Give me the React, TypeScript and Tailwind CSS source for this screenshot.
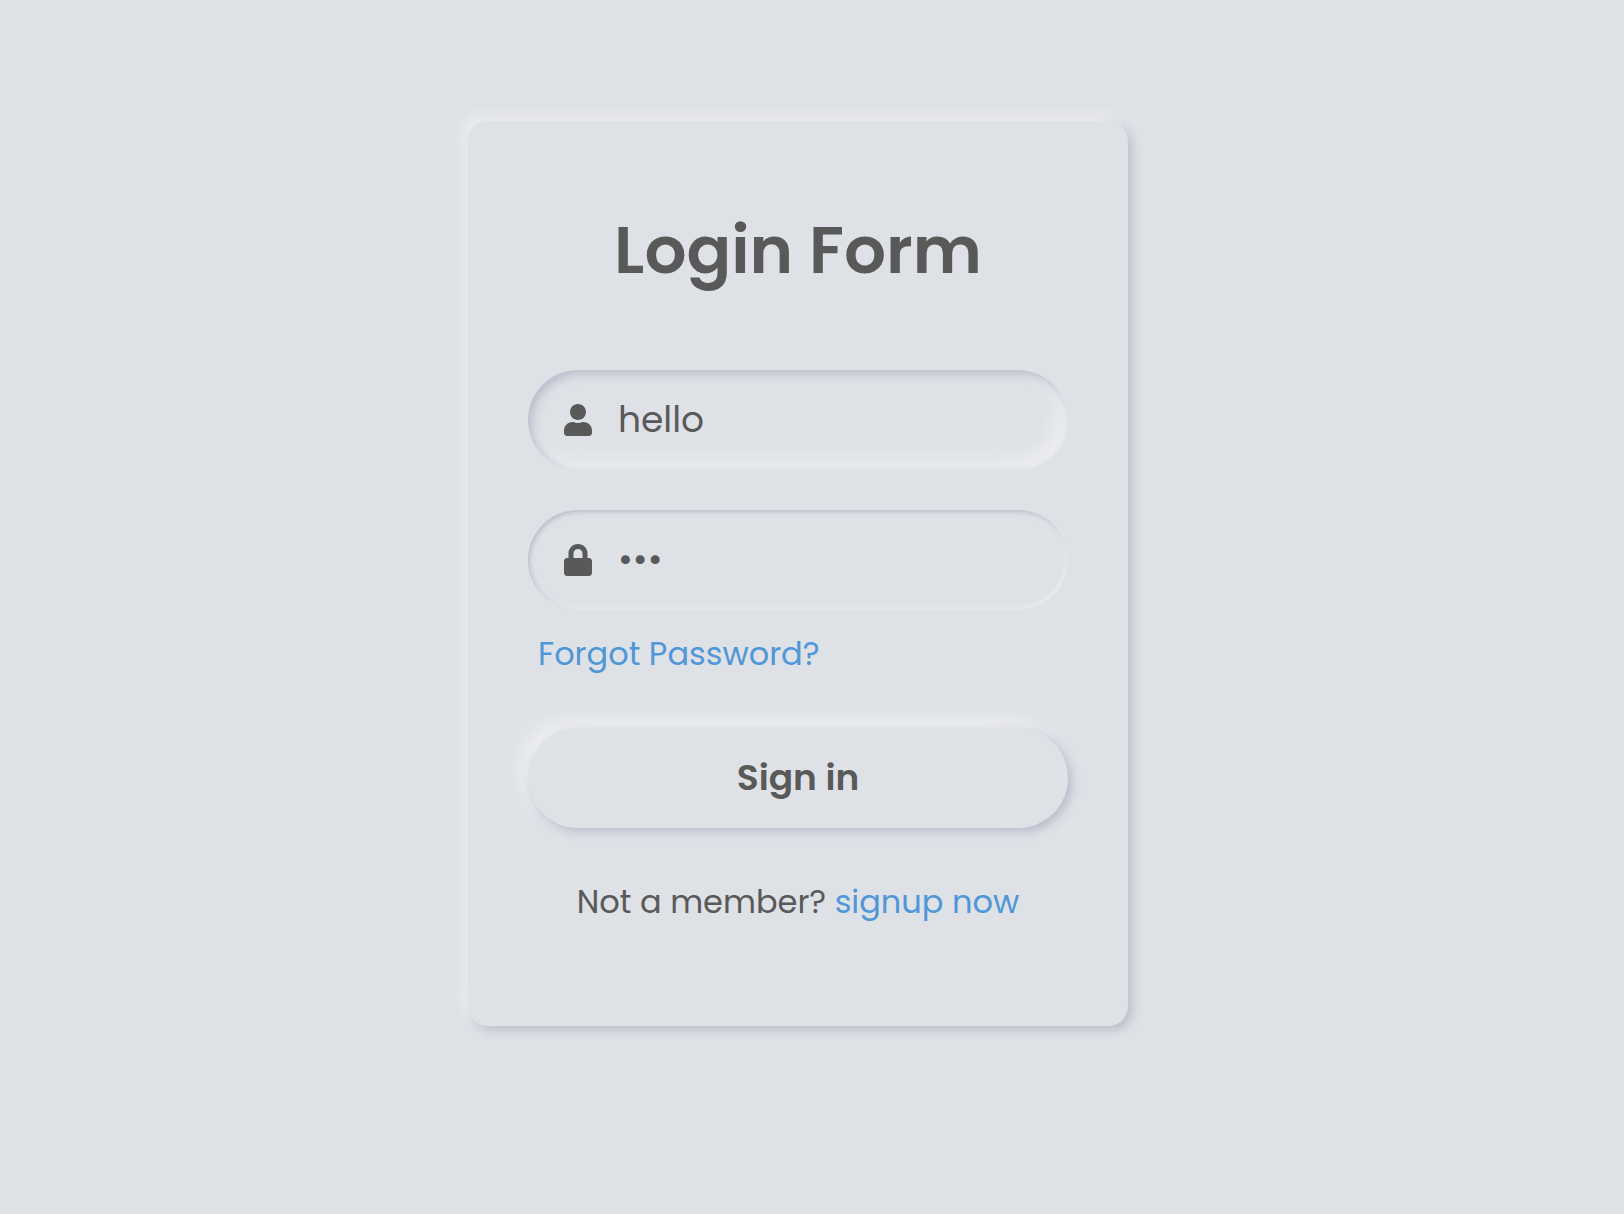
import { FaLock, FaUser } from "react-icons/fa";
import type { ComponentProps } from "react";
import type { IconType } from "react-icons";

type FieldProps = ComponentProps<"input"> & {
  icon: IconType;
  label: string;
  shadow: string;
};

function Field({ icon: Icon, label, shadow, id, ...input }: FieldProps) {
  return (
    <div className={`flex h-[100px] items-center rounded-full ${shadow}`}>
      <label htmlFor={id} aria-label={label} className="w-[90px] shrink-0 pl-[34px]">
        <Icon size={32} />
      </label>
      <input
        id={id}
        className="h-full min-w-0 flex-1 rounded-r-full bg-transparent pr-8 pb-0.5 text-[36px] outline-none"
        {...input}
      />
    </div>
  );
}

export default function App() {
  return (
    <main className="flex min-h-screen items-center justify-center bg-[#dee1e6] pr-7 pb-[67px] font-['Poppins','Inter',sans-serif] text-[#595959]">
      <form
        onSubmit={(e) => e.preventDefault()}
        className="w-full max-w-[660px] rounded-[20px] px-[60px] py-20 text-center shadow-[-6px_-6px_14px_#fffcff73,4px_4px_10px_rgba(94,104,121,0.288)]"
      >
        <h1 className="mb-[70px] text-[66px] leading-[99px] font-semibold">Login Form</h1>

        <div className="flex flex-col gap-10">
          <Field
            id="username"
            label="Email or Phone"
            icon={FaUser}
            type="text"
            defaultValue="hello"
            shadow="shadow-[inset_4px_4px_10px_#babecc,inset_-10px_-10px_20px_#fffcff73]"
          />
          <Field
            id="password"
            label="Password"
            icon={FaLock}
            type="password"
            defaultValue="abc"
            shadow="shadow-[inset_2px_2px_4px_#babecc,inset_-2px_-2px_4px_#fffcff73]"
          />
        </div>

        <div className="mt-5 mb-[50px] ml-[10px] text-left text-[32px] leading-[48px] text-[#5097d8]">
          <a href="#forgot">Forgot Password?</a>
        </div>

        <button
          type="submit"
          className="h-[100px] w-full rounded-full bg-[#dee1e6] text-[36px] font-semibold shadow-[4px_4px_10px_#babecc,-10px_-10px_20px_#fffcff73]"
        >
          Sign in
        </button>

        <div className="mt-[50px] mb-5 text-[32px] leading-[48px]">
          Not a member?{" "}
          <a href="#signup" className="text-[#5097d8]">
            signup now
          </a>
        </div>
      </form>
    </main>
  );
}
